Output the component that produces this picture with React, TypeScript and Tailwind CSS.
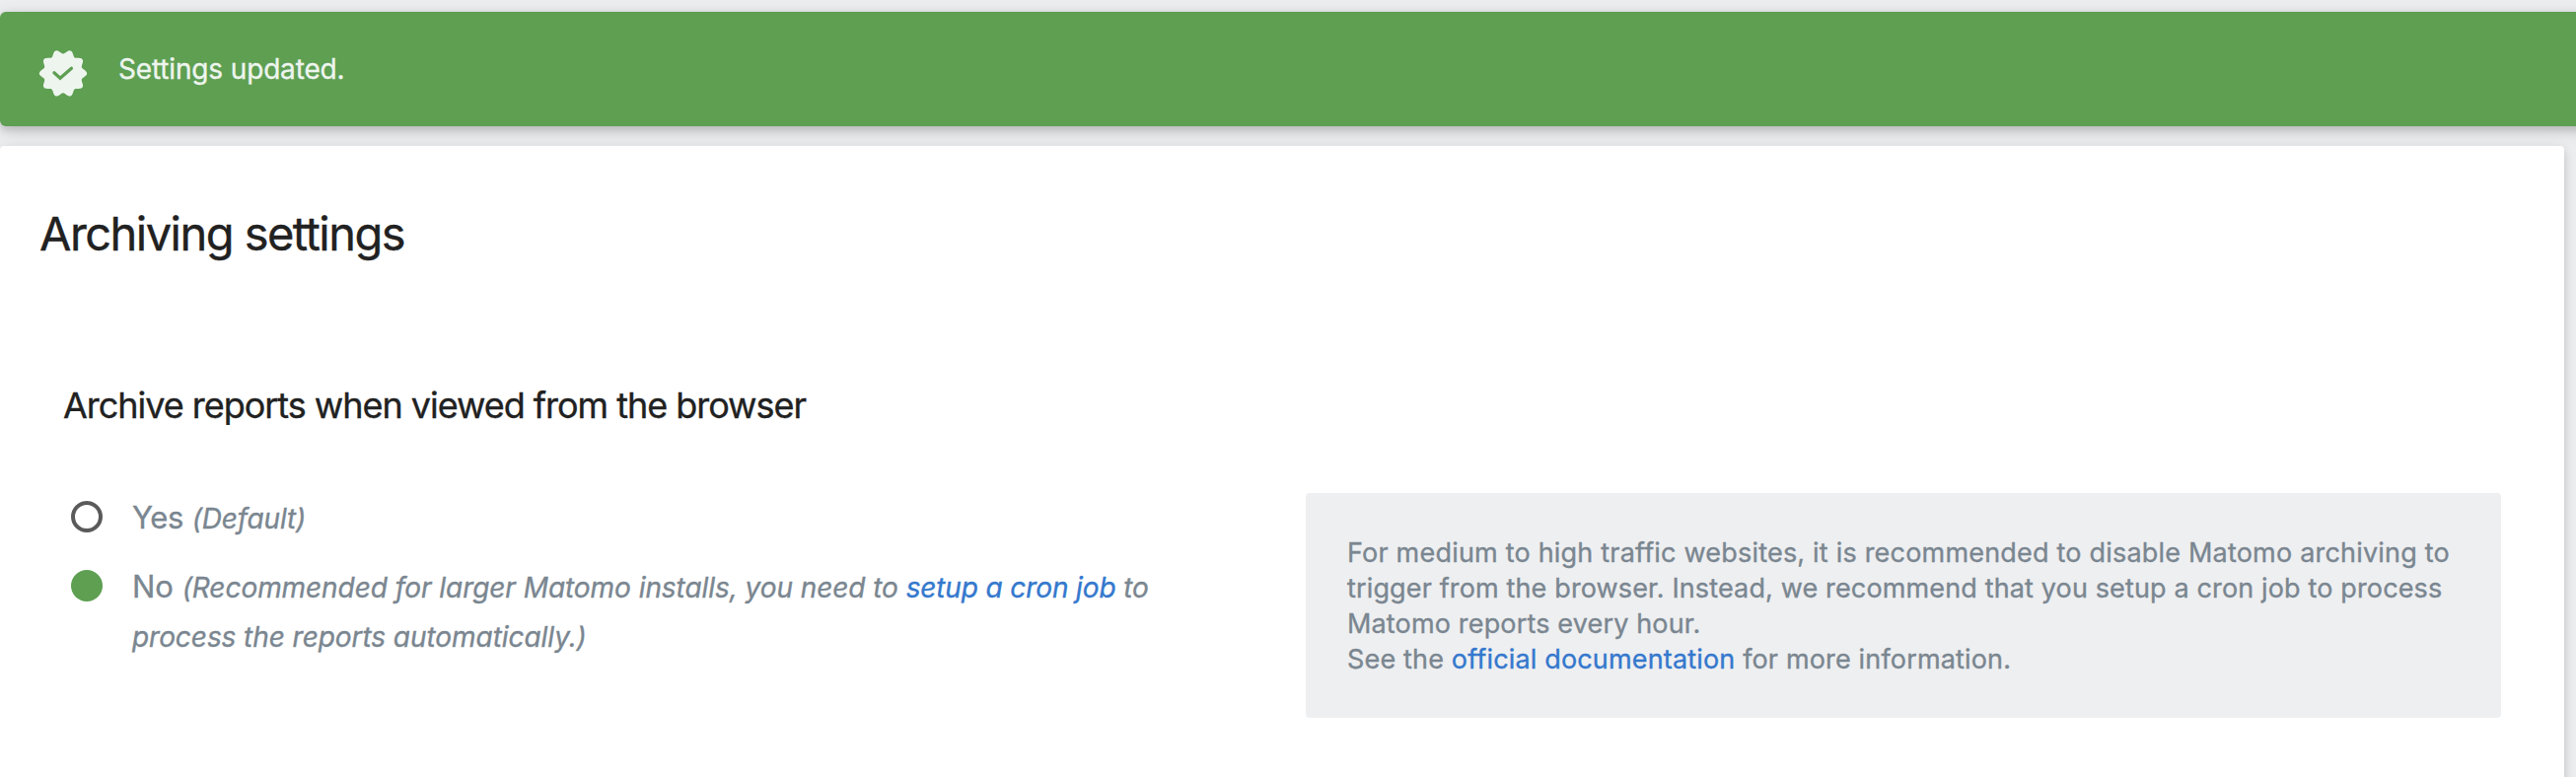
function sealPath() {
  let d = "";
  for (let i = 0; i < 360; i += 3) {
    const t = (i * Math.PI) / 180;
    const r = 22 + 2.2 * Math.cos(10 * t);
    d += `${i ? "L" : "M"}${(25 + r * Math.cos(t)).toFixed(2)} ${(25.4 + r * Math.sin(t)).toFixed(2)}`;
  }
  return d + "Z";
}

function Alert() {
  return (
    <div className="-mr-6 flex h-[116px] rounded-[6px] bg-[#5e9f52] pl-[39px] text-[#eef5ee] shadow-[0_4px_10px_0_rgba(0,0,0,0.16),0_4px_20px_0_rgba(0,0,0,0.12)]">
      <svg className="mt-[37px] size-[50px] shrink-0" viewBox="0 0 50 50">
        <path d={sealPath()} fill="currentColor" />
        <path d="M15.9 24.8L22 30.3L33.500 20.2" fill="none" stroke="#5e9f52" strokeWidth="3.2" strokeLinecap="round" />
      </svg>
      <p className="mt-[38px] ml-[31px] text-[28px] leading-10 tracking-[-0.15px]">Settings updated.</p>
    </div>
  );
}

function Options() {
  return (
    <div className="w-[1252px] text-[31px] leading-[50px]">
      <div className="flex gap-[30px]">
        <span className="mt-[9px] size-8 shrink-0 rounded-full border-4 border-[#5a5a5a]" />
        <p className="pt-px">
          <span className="tracking-[-0.4px]">Yes</span>{" "}
          <em className="text-[28px] leading-none tracking-[-0.1px]">(Default)</em>
        </p>
      </div>
      <div className="mt-[19px] flex gap-[30px]">
        <span className="mt-[9px] size-8 shrink-0 rounded-full bg-[#5e9f52]" />
        <p className="pt-px whitespace-nowrap">
          No{" "}
          <em className="text-[28px] leading-none tracking-[-0.06px]">
            (Recommended for larger Matomo installs, you need to{" "}
            <a className="tracking-[-0.13px] text-[#3478cd]">setup a cron job</a> to
            <br />
            process the reports automatically.)
          </em>
        </p>
      </div>
    </div>
  );
}

function HelpNote() {
  return (
    <div className="mt-px flex h-[228px] w-[1212px] flex-col rounded-[4px] bg-[#eeeff1] px-[42px] pt-[43px] text-[27px] leading-9 tracking-[0.16px] whitespace-nowrap">
      <p className="tracking-[0.2px]">For medium to high traffic websites, it is recommended to disable Matomo archiving to</p>
      <p className="tracking-[0.14px]">trigger from the browser. Instead, we recommend that you setup a cron job to process</p>
      <p>Matomo reports every hour.</p>
      <p>
        See the <a className="text-[#3478cd]">official documentation</a> for more information.
      </p>
    </div>
  );
}

export default function App() {
  return (
    <div className="h-[788px] w-[2612px] overflow-hidden bg-[#edeef0] pt-3 font-['Inter',sans-serif] [-webkit-text-stroke:0.35px]">
      <Alert />
      <div className="mt-5 mr-3 h-[700px] rounded-[4px] bg-white px-10 pt-[59px] shadow-[0_4px_10px_0_rgba(0,0,0,0.16),0_4px_20px_0_rgba(0,0,0,0.06)]">
        <h2 className="text-[47px] leading-[60px] tracking-[-1.53px] text-[#212121]">Archiving settings</h2>
        <h3 className="mt-[120px] ml-6 text-[36px] leading-[48px] tracking-[-1.03px] text-[#212121]">
          Archive reports when viewed from the browser
        </h3>
        <div className="mt-[64px] ml-8 flex text-[#7a8690]">
          <Options />
          <HelpNote />
        </div>
      </div>
    </div>
  );
}
